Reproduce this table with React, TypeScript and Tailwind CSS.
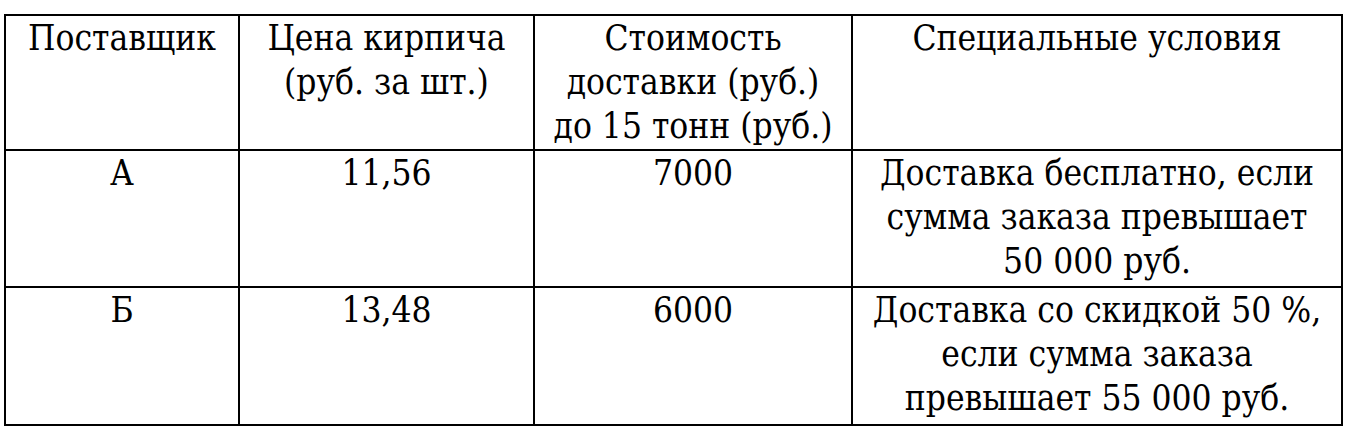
import React from "react";

const cell =
  "border-2 border-black align-top text-center p-0 whitespace-nowrap text-black text-[35px] leading-[44px] [font-family:'DejaVu_Serif_Condensed','DejaVu_Serif',serif] [font-stretch:condensed]";

export default function App() {
  return (
    <div className="w-[1351px] h-[436px] bg-white pt-[14px] pl-[4px]">
      <table className="table-fixed border-collapse">
        <colgroup>
          <col className="w-[234px]" />
          <col className="w-[295px]" />
          <col className="w-[318px]" />
          <col className="w-[490px]" />
        </colgroup>
        <tbody>
          <tr className="h-[135px]">
            <td className={cell}>Поставщик</td>
            <td className={cell}>
              Цена кирпича
              <br />
              (руб. за шт.)
            </td>
            <td className={cell}>
              Стоимость
              <br />
              доставки (руб.)
              <br />
              до 15 тонн (руб.)
            </td>
            <td className={cell}>Специальные условия</td>
          </tr>
          <tr className="h-[137px]">
            <td className={cell}>А</td>
            <td className={cell}>11,56</td>
            <td className={cell}>7000</td>
            <td className={cell}>
              Доставка бесплатно, если
              <br />
              сумма заказа превышает
              <br />
              50 000 руб.
            </td>
          </tr>
          <tr className="h-[138px]">
            <td className={cell}>Б</td>
            <td className={cell}>13,48</td>
            <td className={cell}>6000</td>
            <td className={cell}>
              Доставка со скидкой 50 %,
              <br />
              если сумма заказа
              <br />
              превышает 55 000 руб.
            </td>
          </tr>
        </tbody>
      </table>
    </div>
  );
}
